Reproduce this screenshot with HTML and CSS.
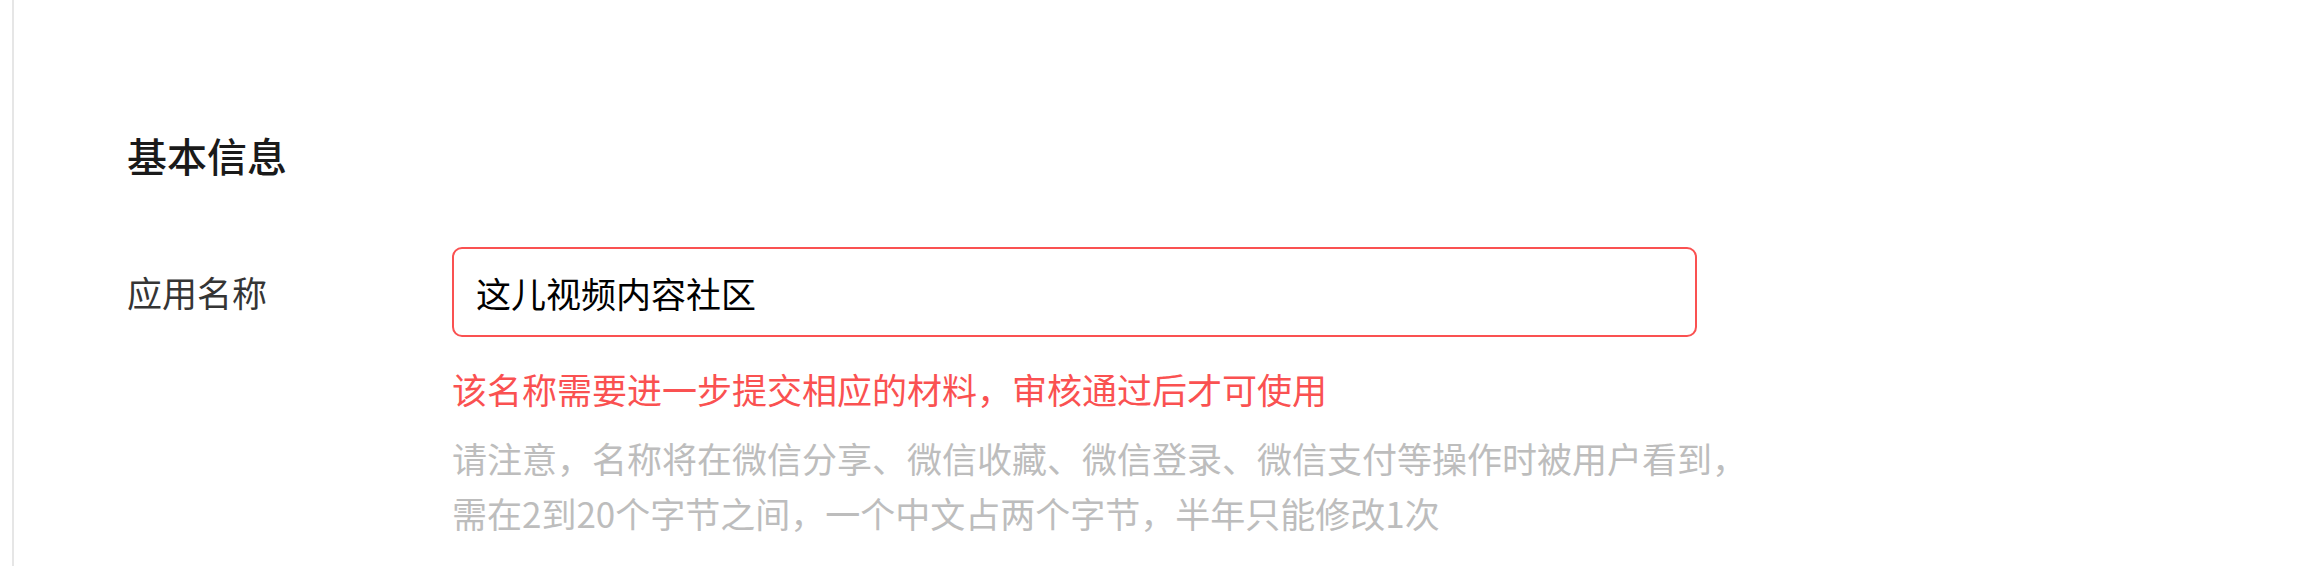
FILE: index.html
```html
<!DOCTYPE html>
<html lang="zh-CN">
<head>
  <meta charset="UTF-8" />
  <meta name="viewport" content="width=device-width, initial-scale=1.0"/>
  <title>基本信息</title>
  <link rel="stylesheet" href="styles.css">
</head>
<body>

  <div class="page">
    <section class="panel">
      <h2 class="panel-title">基本信息</h2>

      <div class="form-row">
        <label class="form-label" for="app_name">应用名称</label>
        <div class="form-control">
          <input type="text" id="app_name" name="app_name" class="text-input is-error" value="这儿视频内容社区">
          <p class="form-error">该名称需要进一步提交相应的材料，审核通过后才可使用</p>
          <p class="form-tips">请注意，名称将在微信分享、微信收藏、微信登录、微信支付等操作时被用户看到，<br>需在2到20个字节之间，一个中文占两个字节，半年只能修改1次</p>
        </div>
      </div>
    </section>
  </div>

</body>
</html>
```

FILE: styles.css
```css
body {
  margin: 0;
  font-family: "Noto Sans CJK SC", "Noto Sans", sans-serif;
  background: #fff;
}
.page {
  margin-left: 12px;
  border-left: 2px solid #e6e6e6;
  min-height: 100vh;
  padding: 127px 0 0 113px;
  box-sizing: border-box;
}
.panel-title {
  font-size: 40px;
  line-height: 56px;
  font-weight: 500;
  color: #1a1a1a;
  margin: 0 0 64px;
}
.form-row {
  display: flex;
}
.form-label {
  width: 325px;
  flex-shrink: 0;
  font-size: 35px;
  line-height: 90px;
  color: #353535;
}
.text-input {
  box-sizing: border-box;
  width: 1245px;
  height: 90px;
  padding: 0 22px;
  border: 2px solid #ccc;
  border-radius: 10px;
  font-family: inherit;
  font-size: 35px;
  color: #000;
  outline: none;
}
.text-input.is-error {
  border-color: #fa5151;
}
.form-error {
  margin: 24px 0 0;
  font-size: 35px;
  line-height: 55px;
  color: #fa5151;
}
.form-tips {
  margin: 14px 0 0;
  font-size: 35px;
  line-height: 55px;
  color: #bdbdbd;
}
```
